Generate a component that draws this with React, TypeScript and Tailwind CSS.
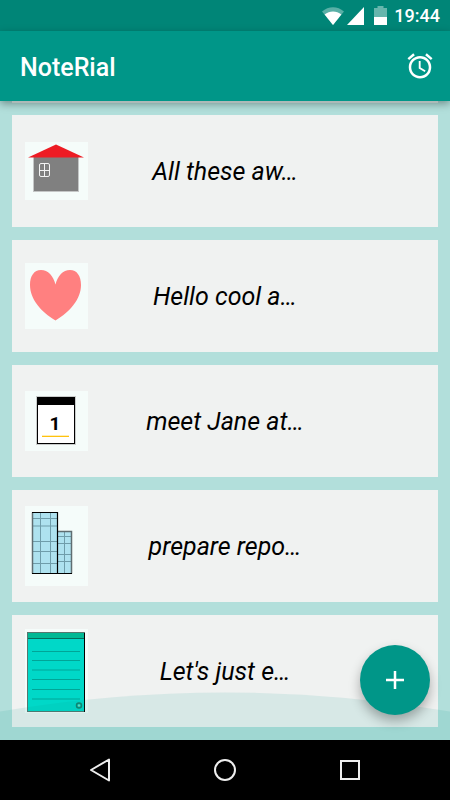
import type { ReactNode } from "react";
import { MdAlarm } from "react-icons/md";

function HouseArt() {
  return (
    <svg width="63" height="58" viewBox="0 0 63 58" aria-hidden="true">
      <rect width="63" height="58" fill="#f5fcfa" />
      <rect x="8.500" y="13.500" width="45" height="36" fill="#808080" stroke="#c4c6c6" />
      <path d="M3 15.500 31 2.500 59 15.500Z" fill="#ed1c24" />
      <rect x="14.500" y="21.500" width="10" height="13" rx="1.500" fill="none" stroke="#f3f3f3" />
      <path d="M19.500 21.500v13M14.500 28.500h10" stroke="#f3f3f3" />
    </svg>
  );
}

function HeartArt() {
  return (
    <svg width="63" height="66" viewBox="0 0 63 66" aria-hidden="true">
      <rect width="63" height="66" fill="#f5fcfa" />
      <path
        d="M30.500 21.500C28.500 13 23 7 16 7 9 7 5 13 5 22c0 14 11 27 25.500 35.500C45 49 56 36 56 22 56 13 52 7 45 7c-7 0-12.500 6-14.500 14.500Z"
        fill="#ff8080"
      />
    </svg>
  );
}

function CalendarArt() {
  return (
    <svg width="63" height="60" viewBox="0 0 63 60" aria-hidden="true">
      <rect width="63" height="60" fill="#f5fcfa" />
      <rect x="11.500" y="5.500" width="39" height="48" fill="none" stroke="#c9cccb" />
      <rect x="12.500" y="6.500" width="37" height="46" fill="#fff" stroke="#000" />
      <rect x="12" y="6" width="38" height="8" fill="#000" />
      <text x="30" y="39" textAnchor="middle" fontFamily="Roboto, sans-serif" fontSize="19" fontWeight="700">
        1
      </text>
      <rect x="17" y="44.700" width="27" height="1.300" fill="#ffc20e" />
    </svg>
  );
}

function BuildingsArt() {
  return (
    <svg width="63" height="80" viewBox="0 0 63 80" aria-hidden="true">
      <rect width="63" height="80" fill="#f5fcfa" />
      <path d="M7.500 6.500h25v19h14v42h-39Z" fill="#aee2ef" />
      <path d="M15.500 6v61M25.500 6v61M8 12.500h25M8 20h25M8 35.500h25M8 45.500h25M8 57.500h25" stroke="#6f9daa" />
      <path d="M39.500 26v41M33 30.500h13M33 37.500h13M33 48.500h13M33 55.500h13" stroke="#6f9daa" />
      <path d="M33 25.500h13.500v42M7.500 67.500v-61" fill="none" stroke="#5f6d71" strokeWidth="1.500" />
      <path d="M7 6.500h25.500v61M7 67.500h40" fill="none" stroke="#000" strokeWidth="1.200" />
    </svg>
  );
}

function NoteArt() {
  return (
    <svg width="63" height="84" viewBox="0 0 63 84" aria-hidden="true">
      <rect width="63" height="84" fill="#f5fcfa" />
      <rect x="2.500" y="3.500" width="57" height="79" fill="#00d8c8" stroke="#55776f" />
      <rect x="3" y="4" width="56" height="5" fill="#00b894" />
      <path d="M3 9.500h56" stroke="#066b5b" />
      <path d="M59.500 4v79" stroke="#000" />
      <path d="M7 22.500h48M7 31.500h48M7 50.500h48M7 60.500h48" stroke="#00a597" />
      <path d="M7 41h48M7 70h48" stroke="#00bfb0" strokeWidth="2" />
      <circle cx="54" cy="76.500" r="2.500" fill="none" stroke="#12836e" strokeWidth="1.500" />
      <circle cx="54" cy="76.500" r="1" fill="#8cd6b8" />
    </svg>
  );
}

const notes: { text: string; art: ReactNode }[] = [
  { text: "All these aw…", art: <HouseArt /> },
  { text: "Hello cool a…", art: <HeartArt /> },
  { text: "meet Jane at…", art: <CalendarArt /> },
  { text: "prepare repo…", art: <BuildingsArt /> },
  { text: "Let's just e…", art: <NoteArt /> },
];

function StatusBar() {
  return (
    <div className="flex h-[31px] items-center justify-end bg-[#008577] pr-2.5 text-white">
      <svg width="22" height="18" viewBox="0 0 22 18" className="mr-[3px]" aria-hidden="true">
        <path d="M0 4.500C6.500-1.300 15.500-1.300 22 4.500L11 18Z" fill="#fff" fillOpacity=".35" />
        <path d="M2.600 7.600C7.500 3.600 14.500 3.600 19.400 7.600L11 18Z" fill="#fff" />
      </svg>
      <svg width="17" height="18" viewBox="0 0 17 18" className="mr-2.5" aria-hidden="true">
        <path d="M17 0v18H0Z" fill="#fff" />
      </svg>
      <svg width="13" height="19" viewBox="0 0 13 19" className="mr-[7px]" aria-hidden="true">
        <path d="M3.500 0h6v2H13v9H0V2h3.500Z" fill="#fff" fillOpacity=".4" />
        <path d="M0 11h13v8H0Z" fill="#fff" />
      </svg>
      <span className="text-lg font-medium">19:44</span>
    </div>
  );
}

function NavBar() {
  return (
    <nav className="flex h-[60px] justify-center bg-black">
      <button aria-label="Back" className="flex w-[125px] items-center justify-center">
        <svg width="24" height="24" viewBox="0 0 24 24" fill="none" stroke="#eee" strokeWidth="2">
          <path d="M21 1.500v21L3 12Z" strokeLinejoin="round" />
        </svg>
      </button>
      <button aria-label="Home" className="flex w-[125px] items-center justify-center">
        <svg width="24" height="24" viewBox="0 0 24 24" fill="none" stroke="#eee" strokeWidth="2">
          <circle cx="12" cy="12" r="10" />
        </svg>
      </button>
      <button aria-label="Recent apps" className="flex w-[125px] items-center justify-center">
        <svg width="24" height="24" viewBox="0 0 24 24" fill="none" stroke="#eee" strokeWidth="2">
          <rect x="3" y="3" width="18" height="18" />
        </svg>
      </button>
    </nav>
  );
}

export default function App() {
  return (
    <div className="flex min-h-screen flex-col bg-[#b2dfdb] font-[Roboto,sans-serif]">
      <StatusBar />
      <header className="flex h-[70px] items-center justify-between bg-[#009688] pr-[15px] pl-5 text-white shadow-[0_3px_8px_rgba(0,0,0,0.35)] z-10">
        <h1 className="pt-1 text-[25px] font-medium">NoteRial</h1>
        <button aria-label="Reminders">
          <MdAlarm size={30} />
        </button>
      </header>

      <main className="relative flex-1">
        {/* bottom edge of the note scrolled under the toolbar */}
        <div className="relative z-20 mx-3 h-0.5 bg-[#adbab8]" />
        <ul className="flex flex-col gap-[13px] px-3 pt-3 pb-[13px]">
          {notes.map((note) => (
            <li
              key={note.text}
              className="grid h-28 grid-cols-[63px_1fr_63px] items-center bg-[#f0f2f1] px-[13px]"
            >
              {note.art}
              <p className="pt-0.5 text-center text-[25px] text-black italic">{note.text}</p>
            </li>
          ))}
        </ul>

        {/* overscroll glow */}
        <svg
          className="pointer-events-none absolute inset-x-0 bottom-0 h-12 w-full"
          viewBox="0 0 450 48"
          preserveAspectRatio="none"
          aria-hidden="true"
        >
          <path d="M0 19.500Q225-18.500 450 19.500V48H0Z" fill="#009688" fillOpacity=".1" />
        </svg>

        <button
          aria-label="Add note"
          className="absolute right-5 bottom-[25px] flex size-[70px] items-center justify-center rounded-full bg-[#009688] shadow-[0_6px_12px_rgba(0,0,0,0.3)]"
        >
          <svg width="18" height="18" viewBox="0 0 18 18" stroke="#fff" strokeWidth="2.500">
            <path d="M9 0v18M0 9h18" />
          </svg>
        </button>
      </main>

      <NavBar />
    </div>
  );
}
